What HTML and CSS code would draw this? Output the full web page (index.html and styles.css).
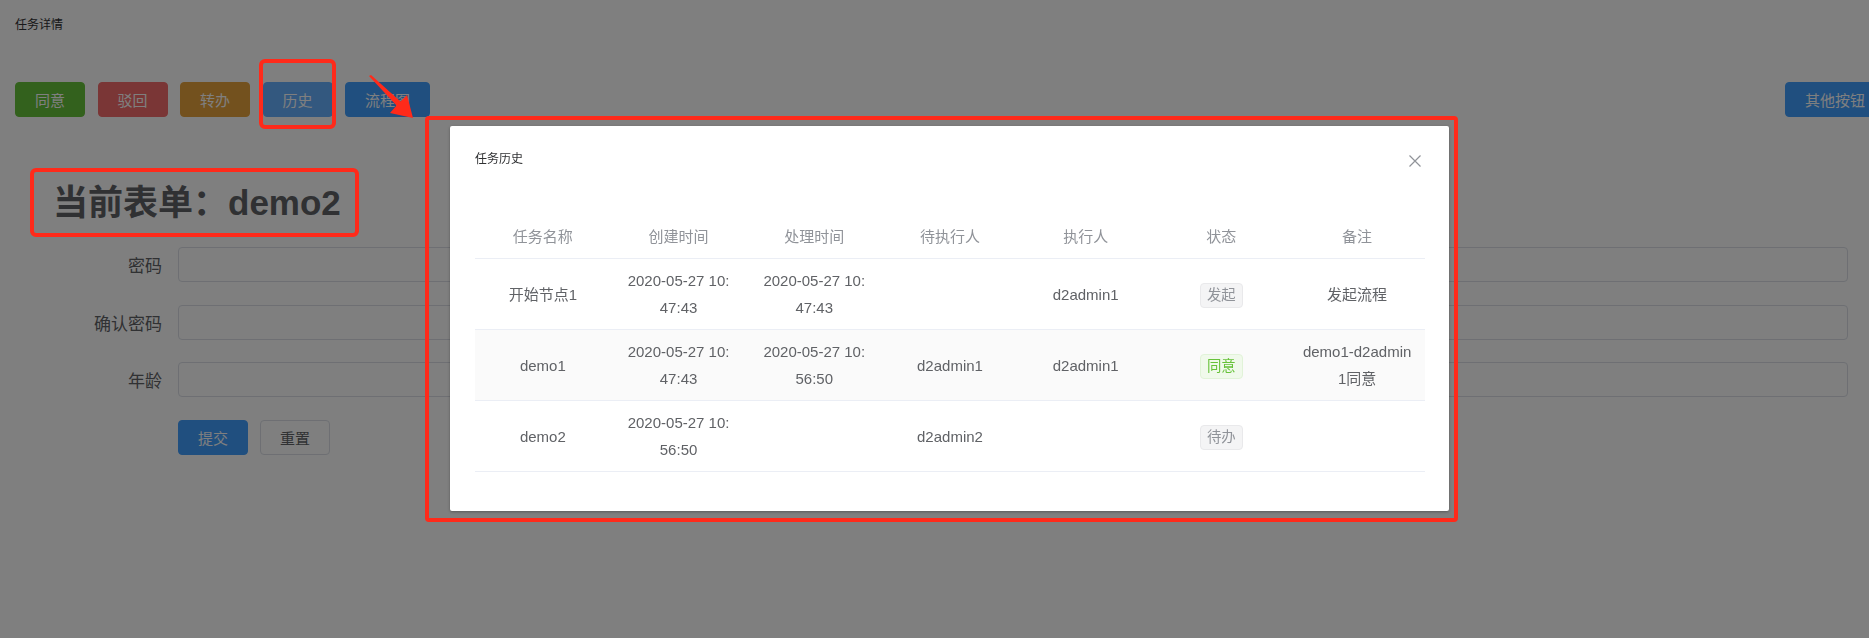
FILE: index.html
```html
<!DOCTYPE html>
<html lang="zh-CN">
<head>
<meta charset="utf-8">
<title>任务详情</title>
<link rel="stylesheet" href="styles.css">
</head>
<body>
<div class="page">
  <div class="crumb">任务详情</div>
  <div class="toolbar">
    <button class="btn btn-success">同意</button>
    <button class="btn btn-danger">驳回</button>
    <button class="btn btn-warning">转办</button>
    <button class="btn btn-primary-light">历史</button>
    <button class="btn btn-primary btn-wide">流程图</button>
    <button class="btn btn-primary btn-other">其他按钮</button>
  </div>
  <h2 class="form-title">当前表单：demo2</h2>
  <form class="form">
    <div class="form-item">
      <label class="form-label">密码</label>
      <div class="form-control"><input class="input" type="text"></div>
    </div>
    <div class="form-item">
      <label class="form-label">确认密码</label>
      <div class="form-control"><input class="input" type="text"></div>
    </div>
    <div class="form-item">
      <label class="form-label">年龄</label>
      <div class="form-control"><input class="input" type="text"></div>
    </div>
    <div class="form-item">
      <span class="form-label"></span>
      <div class="form-actions">
        <button type="button" class="btn btn-primary">提交</button>
        <button type="button" class="btn btn-plain">重置</button>
      </div>
    </div>
  </form>
</div>

<div class="modal-mask"></div>

<div class="dialog">
  <div class="dialog-header">
    <span class="dialog-title">任务历史</span>
    <button class="dialog-close" aria-label="关闭">
      <svg width="12" height="12" viewBox="0 0 12 12"><path d="M0.5 0.5 L11.5 11.5 M11.5 0.5 L0.5 11.5" stroke="#909399" stroke-width="1.2" fill="none"/></svg>
    </button>
  </div>
  <div class="dialog-body">
    <table class="history">
      <thead>
        <tr><th>任务名称</th><th>创建时间</th><th>处理时间</th><th>待执行人</th><th>执行人</th><th>状态</th><th>备注</th></tr>
      </thead>
      <tbody>
        <tr>
          <td>开始节点1</td>
          <td>2020-05-27 10:47:43</td>
          <td>2020-05-27 10:47:43</td>
          <td></td>
          <td>d2admin1</td>
          <td><span class="tag tag-info">发起</span></td>
          <td>发起流程</td>
        </tr>
        <tr class="striped">
          <td>demo1</td>
          <td>2020-05-27 10:47:43</td>
          <td>2020-05-27 10:56:50</td>
          <td>d2admin1</td>
          <td>d2admin1</td>
          <td><span class="tag tag-success">同意</span></td>
          <td>demo1-d2admin1同意</td>
        </tr>
        <tr>
          <td>demo2</td>
          <td>2020-05-27 10:56:50</td>
          <td></td>
          <td>d2admin2</td>
          <td></td>
          <td><span class="tag tag-info">待办</span></td>
          <td></td>
        </tr>
      </tbody>
    </table>
  </div>
</div>

<div class="mark mark-history"></div>
<div class="mark mark-title"></div>
<div class="mark mark-dialog"></div>
<svg class="arrow" width="55" height="55" viewBox="0 0 55 55">
  <polygon points="4,6 6,5 35.5,31.5 42,25 48,48 25,43 31.5,35.5" fill="#ff2a1a"/>
</svg>
</body>
</html>
```

FILE: styles.css
```css
html, body {
  margin: 0;
  padding: 0;
  overflow: hidden;
  background: #ffffff;
}

body {
  font-family: "Liberation Sans", "Noto Sans CJK SC", sans-serif;
  color: #606266;
  width: 1869px;
  height: 638px;
  position: relative;
}

.crumb {
  padding: 17px 0 0 15px;
  height: 16px;
  line-height: 16px;
  font-size: 12px;
  color: #303133;
  margin-bottom: 49px;
}

.toolbar {
  display: flex;
  gap: 12.5px;
  padding-left: 15px;
  margin-right: -16px;
}

.btn {
  height: 35px;
  width: 70px;
  padding: 0;
  border: 1px solid transparent;
  border-radius: 4px;
  font-family: inherit;
  font-size: 15px;
  color: #ffffff;
  cursor: pointer;
  box-sizing: border-box;
}

.btn-wide {
  width: 85px;
}

.btn-other {
  margin-left: auto;
  width: 100px;
}

.btn-success { background: #67c23a; border-color: #67c23a; }
.btn-danger { background: #f56c6c; border-color: #f56c6c; }
.btn-warning { background: #e6a23c; border-color: #e6a23c; }
.btn-primary { background: #409eff; border-color: #409eff; }
.btn-primary-light { background: #66b1ff; border-color: #66b1ff; }
.btn-plain {
  background: #ffffff;
  border-color: #dcdfe6;
  color: #606266;
}

.form-title {
  margin: 62px 0 20px 0;
  padding-left: 53px;
  font-size: 35px;
  line-height: 48px;
  font-weight: bold;
  color: #606266;
}

.form {
  padding-right: 21px;
}

.form-item {
  display: flex;
  align-items: center;
  margin-bottom: 22.5px;
}

.form-label {
  width: 178px;
  box-sizing: border-box;
  padding-right: 16px;
  text-align: right;
  font-size: 17px;
  color: #606266;
}

.form-control {
  flex: 1;
}

.input {
  display: block;
  width: 100%;
  height: 35px;
  box-sizing: border-box;
  border: 1px solid #dcdfe6;
  border-radius: 4px;
  background: #ffffff;
  font-family: inherit;
}

.form-actions {
  display: flex;
  gap: 12px;
}

.modal-mask {
  position: fixed;
  inset: 0;
  background: rgba(0, 0, 0, 0.5);
}

.dialog {
  position: absolute;
  left: 450px;
  top: 126px;
  width: 999px;
  background: #ffffff;
  border-radius: 2px;
  box-shadow: 0 1px 3px rgba(0, 0, 0, 0.3);
}

.dialog-header {
  position: relative;
  padding: 25px 25px 0 25px;
}

.dialog-title {
  display: block;
  font-size: 12px;
  line-height: 16px;
  color: #303133;
}

.dialog-close {
  position: absolute;
  top: 29px;
  right: 28px;
  width: 12px;
  height: 12px;
  padding: 0;
  border: 0;
  background: transparent;
  display: flex;
}

.dialog-body {
  padding: 48px 24px 39px 25px;
}

.history {
  width: 950px;
  table-layout: fixed;
  border-collapse: collapse;
  font-size: 15px;
}

.history th,
.history td {
  padding: 8px 13px;
  line-height: 27px;
  text-align: center;
  vertical-align: middle;
  border-bottom: 1px solid #ebeef5;
  word-break: break-all;
}

.history th {
  font-weight: normal;
  color: #909399;
}

.history td {
  color: #606266;
}

.history tr.striped td {
  background: #fafafa;
}

.tag {
  display: inline-block;
  height: 25px;
  box-sizing: border-box;
  padding: 0 6px;
  line-height: 23px;
  font-size: 14.4px;
  border: 1px solid;
  border-radius: 4px;
  vertical-align: middle;
}

.tag-info {
  background: #f4f4f5;
  border-color: #e9e9eb;
  color: #909399;
}

.tag-success {
  background: #f0f9eb;
  border-color: #e1f3d8;
  color: #67c23a;
}

.mark {
  position: absolute;
  border: 4px solid #ff2a1a;
  border-radius: 6px;
  box-sizing: border-box;
}

.mark-history {
  left: 259px;
  top: 59px;
  width: 77px;
  height: 70px;
}

.mark-title {
  left: 30px;
  top: 168px;
  width: 329px;
  height: 69px;
}

.mark-dialog {
  left: 425px;
  top: 116px;
  width: 1033px;
  height: 406px;
  border-radius: 4px;
}

.arrow {
  position: absolute;
  left: 365px;
  top: 70px;
}
```
